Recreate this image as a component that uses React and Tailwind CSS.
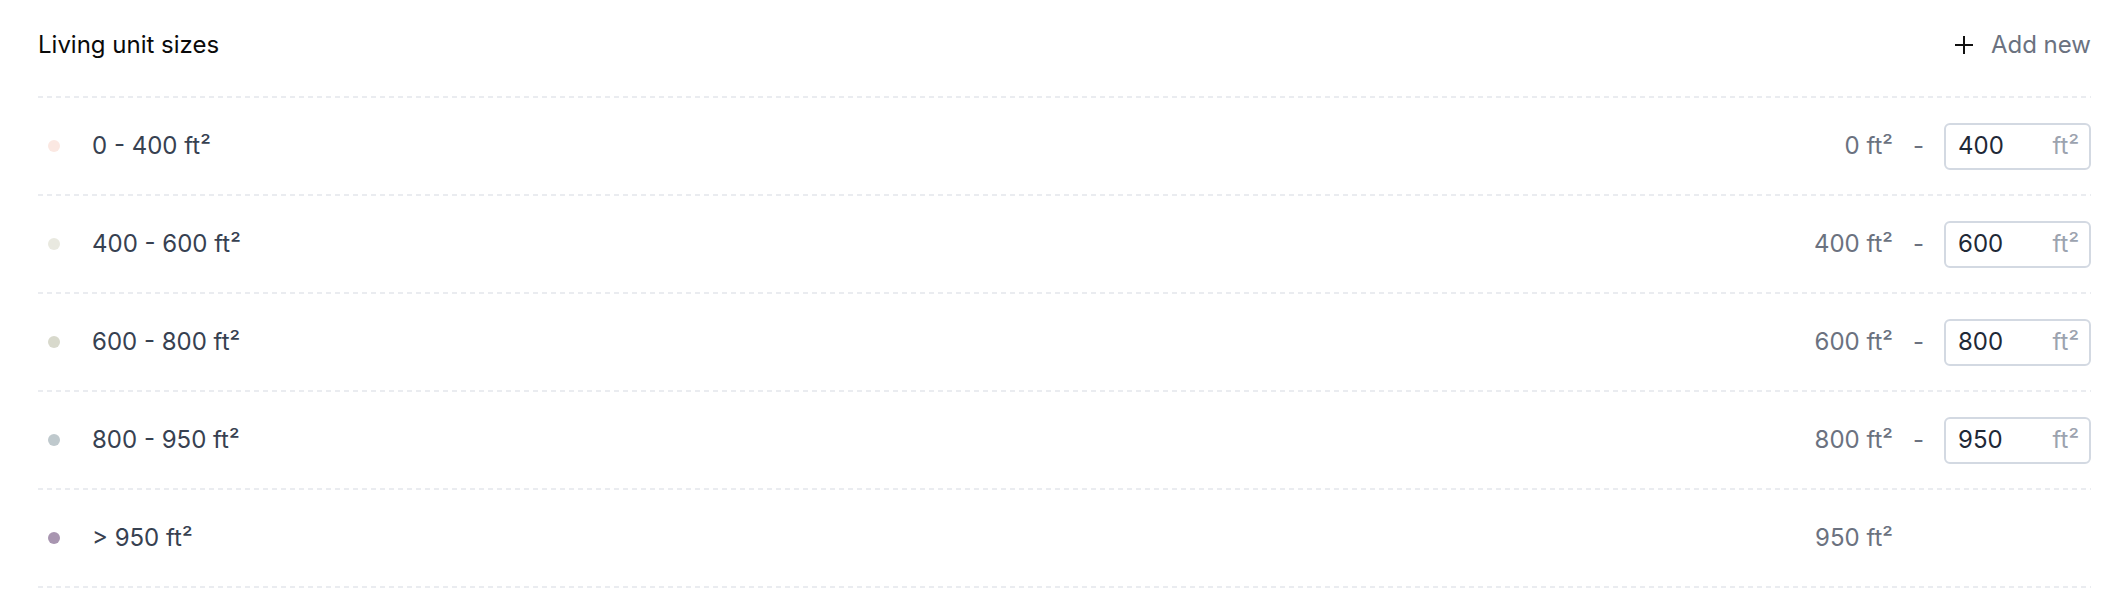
import React from "react";

const rows = [
  { label: "0 - 400 ft²", from: "0 ft²", to: "400", color: "#fbe8e2" },
  { label: "400 - 600 ft²", from: "400 ft²", to: "600", color: "#e9e9e0" },
  { label: "600 - 800 ft²", from: "600 ft²", to: "800", color: "#d8d9cc" },
  { label: "800 - 950 ft²", from: "800 ft²", to: "950", color: "#bfc9cd" },
  { label: "> 950 ft²", from: "950 ft²", to: null, color: "#a895b0" },
];

function Divider() {
  return (
    <div className="h-[2px] w-full bg-[repeating-linear-gradient(to_right,#eaecf0_0px,#eaecf0_5px,transparent_5px,transparent_9px)]" />
  );
}

export default function App() {
  return (
    <div
      className="w-full bg-white pl-[38px] pr-[35px] text-[24px]"
      style={{ fontFamily: "Inter, 'Noto Sans', sans-serif" }}
    >
      <div className="flex items-center justify-between h-[90px] mb-[6px]">
        <div className="font-normal text-[#0a0a0a] leading-[44px]">Living unit sizes</div>
        <button className="flex items-center gap-[18px] text-[#6b7280] leading-[44px]">
          <svg width="18" height="18" viewBox="0 0 18 18" fill="none" stroke="#111111" strokeWidth="2" strokeLinecap="butt">
            <path d="M9 0v18M0 9h18" />
          </svg>
          <span>Add new</span>
        </button>
      </div>
      <Divider />
      {rows.map((r) => (
        <div key={r.label}>
          <div className="flex items-center justify-between h-[96px]">
            <div className="flex items-center">
              <span className="ml-[10px] w-[12px] h-[12px] rounded-full" style={{ backgroundColor: r.color }} />
              <span className="ml-[32px] text-[#374151]">{r.label}</span>
            </div>
            <div className="flex items-center">
              <span className="text-[#6b7280]">{r.from}</span>
              <span className={r.to ? "mx-[20px] text-[#6b7280]" : "mx-[20px] text-transparent"}>-</span>
              {r.to ? (
                <div className="flex items-center justify-between w-[147px] h-[47px] rounded-[6px] border-2 border-[#d3d9e2] pl-[12px] pr-[10px]">
                  <span className="text-[#1f2937]">{r.to}</span>
                  <span className="text-[#9ca3af]">ft²</span>
                </div>
              ) : (
                <div className="w-[147px] h-[47px]" />
              )}
            </div>
          </div>
          <Divider />
        </div>
      ))}
    </div>
  );
}
